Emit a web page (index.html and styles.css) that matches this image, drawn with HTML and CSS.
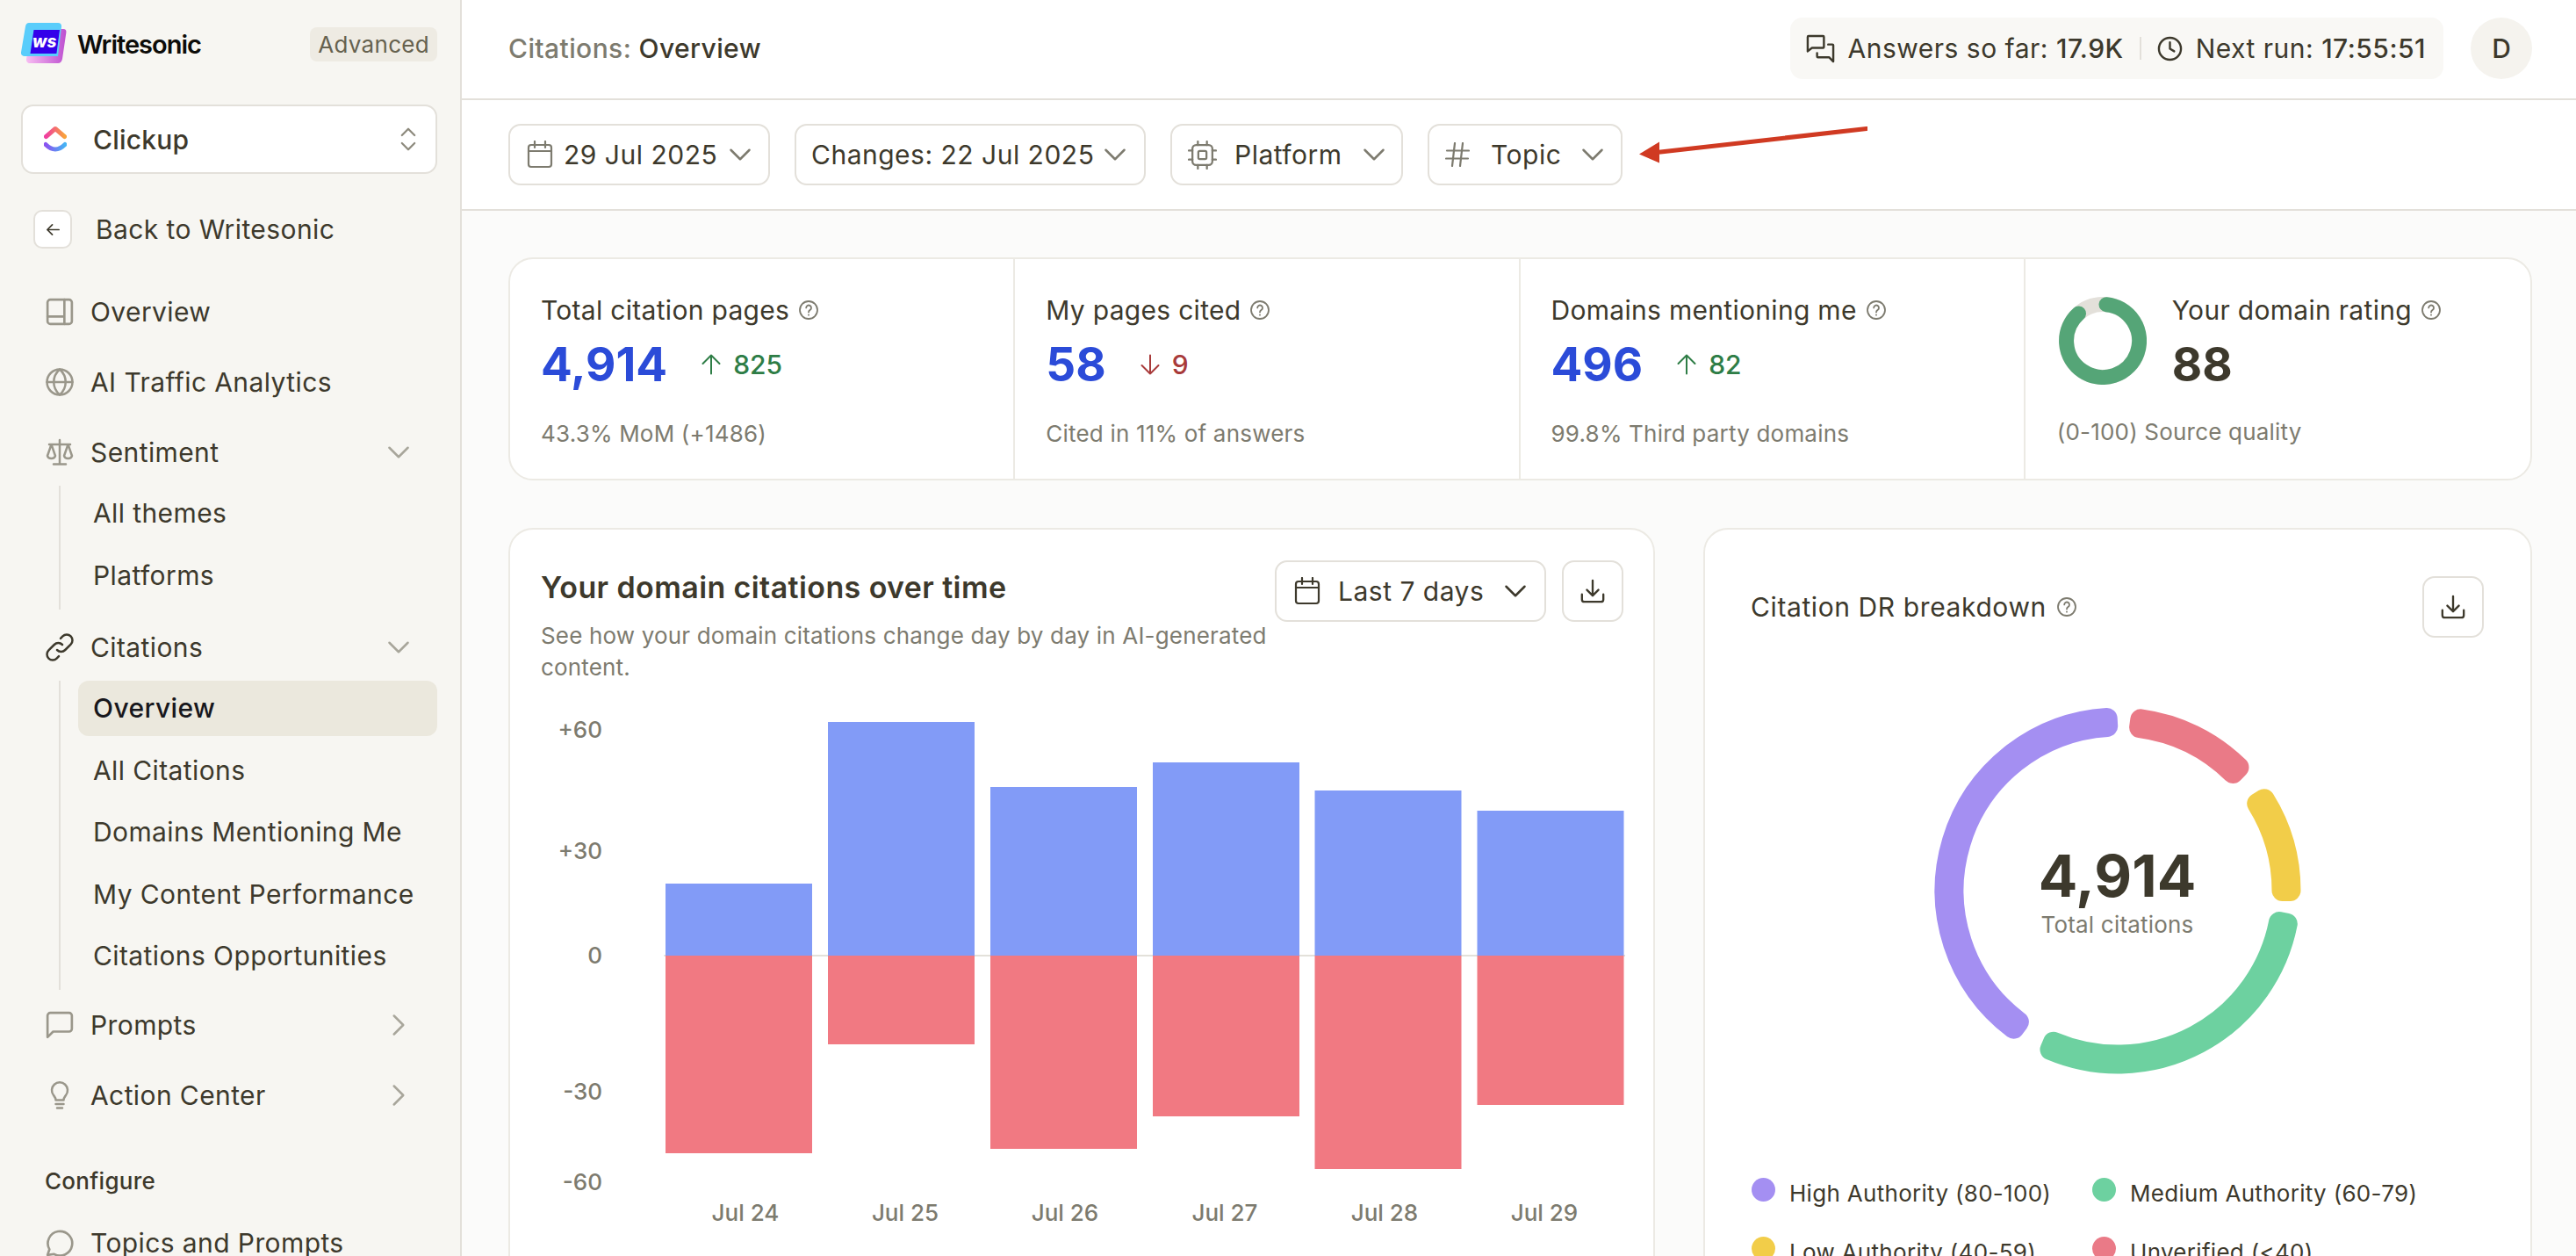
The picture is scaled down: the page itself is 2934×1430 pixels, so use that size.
FILE: index.html
```html
<!DOCTYPE html>
<html>

<head>
    <meta charset="utf-8" />
    <title>Citations: Overview</title>
    <meta name="viewport" content="width=device-width, initial-scale=1">
    <link rel="stylesheet" href="styles.css">
</head>

<body>
    <svg class="defs">
        <defs>
            <symbol id="i-chev" viewBox="0 0 24 24"><path d="M5 8.500l7 7 7-7" /></symbol>
            <symbol id="i-cal" viewBox="0 0 30 32"><rect x="2" y="5" width="26" height="25" rx="3" /><path d="M2 12h26M9 1v7M21 1v7" /></symbol>
            <symbol id="i-help" viewBox="0 0 24 24"><circle cx="12" cy="12" r="10" /><path d="M9.200 9.400a2.900 2.900 0 1 1 4.600 2.400c-1.100.8-1.800 1.300-1.800 2.600M12 17.400v.3" /></symbol>
            <symbol id="i-down" viewBox="0 0 32 32"><path d="M16 3v18M9 14.500l7 7 7-7M3 20v6a3 3 0 0 0 3 3h20a3 3 0 0 0 3-3v-6" /></symbol>
        </defs>
    </svg>

    <div class="app">
        <aside class="sidebar">
            <div class="brand">
                <svg class="brand-logo" viewBox="0 0 52 48">
                    <defs>
                        <linearGradient id="ws1" x1="0" x2="1" y1="0" y2="0"><stop offset="0" stop-color="#f8bdf2" /><stop offset="1" stop-color="#bd4fd0" /></linearGradient>
                    </defs>
                    <path d="M11 7h37c2.500 0 3.800 1.500 3.400 4L47 41c-.5 3-2.500 5-5 5H10c-2.500 0-4.300-2-4-4.500z" fill="url(#ws1)" />
                    <path d="M9 0h33c3 0 4.300 2 4 4.500L42 38H4c-3 0-4.400-2-4-4.500L5 4C5.500 1.500 7 0 9 0z" fill="#5acdfb" />
                    <path d="M14.500 8H44l-3.600 27H10.500z" fill="#3300ea" />
                    <text x="13" y="28" class="brand-ws">ws</text>
                </svg>
                <span class="brand-name">Writesonic</span>
                <span class="badge">Advanced</span>
            </div>

            <div class="project">
                <svg class="project-logo" viewBox="0 0 26 32">
                    <defs>
                        <linearGradient id="cu1" x1="0" x2="1" y1="0" y2="0"><stop offset="0" stop-color="#f03ea0" /><stop offset="1" stop-color="#f8a23c" /></linearGradient>
                        <linearGradient id="cu2" x1="0" x2="1" y1="0" y2="0"><stop offset="0" stop-color="#8b52f0" /><stop offset="1" stop-color="#46b4f4" /></linearGradient>
                    </defs>
                    <path d="M2.500 12.500L13 3.500l10.500 9" fill="none" stroke="url(#cu1)" stroke-width="5" />
                    <path d="M2 21.500c3 3 6.500 5.500 11 5.500s8-2.500 11-5.500" fill="none" stroke="url(#cu2)" stroke-width="5" />
                </svg>
                <span class="project-name">Clickup</span>
                <svg class="project-sort" viewBox="0 0 20 30"><path d="M2 10l8-8 8 8M2 20l8 8 8-8" /></svg>
            </div>

            <div class="back">
                <span class="back-btn"><svg viewBox="0 0 18 18"><path d="M16 9H2M8 3L2 9l6 6" /></svg></span>
                <span>Back to Writesonic</span>
            </div>

            <nav class="nav">
                <div class="nav-item">
                    <svg class="nav-icon" viewBox="0 0 30 30"><rect x="2" y="2" width="26" height="26" rx="3" /><path d="M20 2v26M2 20h18" /></svg>
                    <span>Overview</span>
                </div>
                <div class="nav-item">
                    <svg class="nav-icon" viewBox="0 0 32 32"><circle cx="16" cy="16" r="14.500" /><path d="M1.500 16h29M16 1.500c-9 8-9 21 0 29M16 1.500c9 8 9 21 0 29" /></svg>
                    <span>AI Traffic Analytics</span>
                </div>
                <div class="nav-item">
                    <svg class="nav-icon" viewBox="0 0 32 30"><path d="M16 1v26M9 28.500h14M4 6h24M6.500 6L2 19c1 4 8 4 9 0L6.500 6zM25.500 6L21 19c1 4 8 4 9 0L25.500 6z" /></svg>
                    <span>Sentiment</span>
                    <svg class="nav-chev" viewBox="0 0 24 24"><use href="#i-chev" /></svg>
                </div>
                <div class="nav-sub nav-sub-short">
                    <div class="sub-item">All themes</div>
                    <div class="sub-item">Platforms</div>
                </div>
                <div class="nav-item">
                    <svg class="nav-icon nav-icon-dark" viewBox="0 0 32 32"><path d="M13 19a6.500 6.500 0 0 0 9.200 0l6.400-6.400a6.500 6.500 0 0 0-9.200-9.200l-2.400 2.400M19 13a6.500 6.500 0 0 0-9.200 0l-6.400 6.400a6.500 6.500 0 0 0 9.200 9.200l2.400-2.400" /></svg>
                    <span>Citations</span>
                    <svg class="nav-chev" viewBox="0 0 24 24"><use href="#i-chev" /></svg>
                </div>
                <div class="nav-sub">
                    <div class="sub-item sub-item-active">Overview</div>
                    <div class="sub-item">All Citations</div>
                    <div class="sub-item">Domains Mentioning Me</div>
                    <div class="sub-item">My Content Performance</div>
                    <div class="sub-item">Citations Opportunities</div>
                </div>
                <div class="nav-item">
                    <svg class="nav-icon" viewBox="0 0 30 30"><path d="M2 28V5a3 3 0 0 1 3-3h20a3 3 0 0 1 3 3v14a3 3 0 0 1-3 3H8z" /></svg>
                    <span>Prompts</span>
                    <svg class="nav-chev nav-chev-right" viewBox="0 0 24 24"><use href="#i-chev" /></svg>
                </div>
                <div class="nav-item">
                    <svg class="nav-icon" viewBox="0 0 30 32"><path d="M10.500 21.500c0-2.500-1-3.500-2.500-5.500a9 9 0 1 1 14 0c-1.500 2-2.500 3-2.500 5.500zM10.500 26h9M12 30.500h6" /></svg>
                    <span>Action Center</span>
                    <svg class="nav-chev nav-chev-right" viewBox="0 0 24 24"><use href="#i-chev" /></svg>
                </div>
                <div class="nav-label">Configure</div>
                <div class="nav-item">
                    <svg class="nav-icon" viewBox="0 0 30 30"><path d="M2 28l2-6a13 13 0 1 1 5 5z" /></svg>
                    <span>Topics and Prompts</span>
                </div>
            </nav>
        </aside>

        <main class="content">
            <header class="topbar">
                <div class="crumbs"><span class="crumb-muted">Citations:</span> Overview</div>
                <div class="topbar-right">
                    <div class="usage">
                        <svg class="usage-icon" viewBox="0 0 34 34"><path d="M2 20V3a1 1 0 0 1 1-1h17a1 1 0 0 1 1 1v12a1 1 0 0 1-1 1H7zM26 12h5a1 1 0 0 1 1 1v19l-5-5H14a1 1 0 0 1-1-1v-4" /></svg>
                        <span>Answers so far: <b>17.9K</b></span>
                        <span class="usage-sep"></span>
                        <svg class="usage-icon usage-clock" viewBox="0 0 30 30"><circle cx="15" cy="15" r="13" /><path d="M15 7.500V15l5 3" /></svg>
                        <span>Next run: <b>17:55:51</b></span>
                    </div>
                    <div class="avatar">D</div>
                </div>
            </header>

            <div class="filters">
                <button class="btn btn-date">
                    <svg class="btn-icon" viewBox="0 0 30 32"><use href="#i-cal" /></svg>
                    <span>29 Jul 2025</span>
                    <svg class="btn-chev" viewBox="0 0 24 24"><use href="#i-chev" /></svg>
                </button>
                <button class="btn btn-changes">
                    <span>Changes: 22 Jul 2025</span>
                    <svg class="btn-chev" viewBox="0 0 24 24"><use href="#i-chev" /></svg>
                </button>
                <button class="btn btn-platform">
                    <svg class="btn-icon btn-icon-chip" viewBox="0 0 32 32"><rect x="5" y="5" width="22" height="22" rx="4" /><rect x="11.500" y="11.500" width="9" height="9" rx="1.500" /><path d="M11 1v4M21 1v4M11 27v4M21 27v4M1 11h4M1 21h4M27 11h4M27 21h4" /></svg>
                    <span>Platform</span>
                    <svg class="btn-chev" viewBox="0 0 24 24"><use href="#i-chev" /></svg>
                </button>
                <button class="btn btn-topic">
                    <svg class="btn-icon btn-icon-hash" viewBox="0 0 28 28"><path d="M2 9.500h25M1 18.500h25M11 1L8 27M20 1l-3 26" /></svg>
                    <span>Topic</span>
                    <svg class="btn-chev" viewBox="0 0 24 24"><use href="#i-chev" /></svg>
                </button>
                <svg class="callout" viewBox="0 0 260 50">
                    <path d="M20 30.500L259 3.500" stroke="#d03a22" stroke-width="5" fill="none" />
                    <path d="M0 32.500L23 18.500v24z" fill="#d03a22" />
                </svg>
            </div>

            <div class="page">
                <section class="stats">
                    <div class="stat">
                        <div class="stat-label">Total citation pages <svg class="help" viewBox="0 0 24 24"><use href="#i-help" /></svg></div>
                        <div class="stat-row">
                            <span class="stat-num">4,914</span>
                            <span class="delta delta-up"><svg viewBox="0 0 24 26"><path d="M12 23.500v-21M2.500 12L12 2.500l9.500 9.500" /></svg>825</span>
                        </div>
                        <div class="stat-note">43.3% MoM (+1486)</div>
                    </div>
                    <div class="stat">
                        <div class="stat-label">My pages cited <svg class="help" viewBox="0 0 24 24"><use href="#i-help" /></svg></div>
                        <div class="stat-row">
                            <span class="stat-num">58</span>
                            <span class="delta delta-down"><svg viewBox="0 0 24 26"><path d="M12 2.500v21M2.500 14l9.500 9.500 9.500-9.500" /></svg>9</span>
                        </div>
                        <div class="stat-note">Cited in 11% of answers</div>
                    </div>
                    <div class="stat">
                        <div class="stat-label">Domains mentioning me <svg class="help" viewBox="0 0 24 24"><use href="#i-help" /></svg></div>
                        <div class="stat-row">
                            <span class="stat-num">496</span>
                            <span class="delta delta-up"><svg viewBox="0 0 24 26"><path d="M12 23.500v-21M2.500 12L12 2.500l9.500 9.500" /></svg>82</span>
                        </div>
                        <div class="stat-note">99.8% Third party domains</div>
                    </div>
                    <div class="stat stat-rating">
                        <div class="rating-top">
                            <svg class="rating-ring" viewBox="0 0 100 100">
                                <circle cx="50" cy="50" r="41.500" fill="none" stroke="#e3e0da" stroke-width="17" />
                                <path d="M54 8.700A41.500 41.500 0 1 1 22.500 19" fill="none" stroke="#55a577" stroke-width="17" />
                            </svg>
                            <div>
                                <div class="stat-label">Your domain rating <svg class="help" viewBox="0 0 24 24"><use href="#i-help" /></svg></div>
                                <div class="stat-row"><span class="stat-num stat-num-dark">88</span></div>
                            </div>
                        </div>
                        <div class="stat-note">(0-100) Source quality</div>
                    </div>
                </section>

                <section class="panels">
                    <div class="panel panel-chart">
                        <div class="panel-head">
                            <div class="panel-intro">
                                <h2>Your domain citations over time</h2>
                                <p>See how your domain citations change day by day in AI-generated content.</p>
                            </div>
                            <div class="panel-tools">
                                <button class="btn btn-range">
                                    <svg class="btn-icon" viewBox="0 0 30 32"><use href="#i-cal" /></svg>
                                    <span>Last 7 days</span>
                                    <svg class="btn-chev" viewBox="0 0 24 24"><use href="#i-chev" /></svg>
                                </button>
                                <button class="btn btn-square"><svg viewBox="0 0 32 32"><use href="#i-down" /></svg></button>
                            </div>
                        </div>
                        <svg class="chart" viewBox="0 0 1268 600" width="1268" height="600">
                            <line x1="174" x2="1268" y1="288" y2="288" stroke="#e3e1da" stroke-width="2" />
                            <g fill="#829bf7">
                                <rect x="175" y="206" width="167" height="82" />
                                <rect x="360" y="22" width="167" height="266" />
                                <rect x="545" y="96" width="167" height="192" />
                                <rect x="730" y="68" width="167" height="220" />
                                <rect x="914.500" y="100" width="167" height="188" />
                                <rect x="1099.500" y="123" width="167" height="165" />
                            </g>
                            <g fill="#f17982">
                                <rect x="175" y="288" width="167" height="225" />
                                <rect x="360" y="288" width="167" height="101" />
                                <rect x="545" y="288" width="167" height="220" />
                                <rect x="730" y="288" width="167" height="183" />
                                <rect x="914.500" y="288" width="167" height="243" />
                                <rect x="1099.500" y="288" width="167" height="170" />
                            </g>
                            <g class="chart-y">
                                <text x="103" y="40">+60</text>
                                <text x="103" y="178">+30</text>
                                <text x="103" y="297">0</text>
                                <text x="103" y="452">-30</text>
                                <text x="103" y="555">-60</text>
                            </g>
                            <g class="chart-x">
                                <text x="266" y="590">Jul 24</text>
                                <text x="448" y="590">Jul 25</text>
                                <text x="630" y="590">Jul 26</text>
                                <text x="812" y="590">Jul 27</text>
                                <text x="994" y="590">Jul 28</text>
                                <text x="1176" y="590">Jul 29</text>
                            </g>
                        </svg>
                    </div>

                    <div class="panel panel-dr">
                        <div class="dr-head">
                            <div class="dr-title">Citation DR breakdown <svg class="help" viewBox="0 0 24 24"><use href="#i-help" /></svg></div>
                            <button class="btn btn-square"><svg viewBox="0 0 32 32"><use href="#i-down" /></svg></button>
                        </div>
                        <div class="donut">
                            <svg viewBox="-210 -210 420 420" width="420" height="420">
                                <g stroke-width="24" stroke-linejoin="round">
                                    <path fill="#a48ff2" stroke="#a48ff2" d="M-118.500 156.700A196.500 196.500 0 0 1-12.300-196.100L-11.800-187.100A187.500 187.500 0 0 0-113.100 149.500Z" />
                                    <path fill="#ea7a87" stroke="#ea7a87" d="M26.300-194.700A196.500 196.500 0 0 1 137.500-140.400L131.200-134A187.500 187.500 0 0 0 25.100-185.800Z" />
                                    <path fill="#f2cd49" stroke="#f2cd49" d="M166.800-103.800A196.500 196.500 0 0 1 196.500 0L187.500 0A187.500 187.500 0 0 0 159.200-99.100Z" />
                                    <path fill="#6dd1a0" stroke="#6dd1a0" d="M192.800 37.800A196.500 196.500 0 0 1-76.500 181L-73 172.700A187.500 187.500 0 0 0 184 36.100Z" />
                                </g>
                            </svg>
                            <div class="donut-center">
                                <div class="donut-num">4,914</div>
                                <div class="donut-label">Total citations</div>
                            </div>
                        </div>
                        <div class="legend">
                            <div class="legend-item"><span class="dot dot-high"></span>High Authority (80-100)</div>
                            <div class="legend-item"><span class="dot dot-medium"></span>Medium Authority (60-79)</div>
                            <div class="legend-item"><span class="dot dot-low"></span>Low Authority (40-59)</div>
                            <div class="legend-item"><span class="dot dot-unverified"></span>Unverified (&lt;40)</div>
                        </div>
                    </div>
                </section>
            </div>
        </main>
    </div>
</body>

</html>
```

FILE: styles.css
```css
* {
    box-sizing: border-box;
}

html,
body {
    margin: 0;
    height: 100%;
    overflow: hidden;
}

body {
    font-family: Inter, "Noto Sans", sans-serif;
    color: #3d392c;
    background: #fff;
}

svg {
    fill: none;
    stroke: currentColor;
    stroke-linecap: round;
    stroke-linejoin: round;
    flex-shrink: 0;
}

.defs {
    display: none;
}

.app {
    display: flex;
    height: 1430px;
    overflow: hidden;
}

/* sidebar */
.sidebar {
    width: 526px;
    flex-shrink: 0;
    background: #f7f6f2;
    border-right: 2px solid #e3e0da;
    padding: 27px 26px 0 24px;
    overflow: hidden;
}

.brand {
    display: flex;
    align-items: center;
    height: 46px;
}

.brand-logo {
    width: 52px;
    height: 48px;
    stroke: none;
}

.brand-ws {
    font-family: Inter, sans-serif;
    font-size: 19px;
    font-weight: 800;
    font-style: italic;
    fill: #fff;
}

.brand-name {
    margin-left: 12px;
    font-size: 29px;
    font-weight: 600;
    letter-spacing: -1px;
    color: #0d0c09;
}

.badge {
    margin-left: auto;
    height: 39px;
    padding: 0 9px;
    display: flex;
    align-items: center;
    font-size: 26px;
    letter-spacing: .3px;
    color: #66624f;
    background: #eeebe3;
    border-radius: 8px;
}

.project {
    display: flex;
    align-items: center;
    height: 79px;
    margin-top: 46px;
    padding: 0 22px 0 24px;
    background: #fff;
    border: 2px solid #e3e0da;
    border-radius: 14px;
}

.project-logo {
    width: 26px;
    height: 32px;
    stroke: none;
}

.project-name {
    margin-left: 30px;
    font-size: 30px;
    font-weight: 500;
    letter-spacing: .2px;
}

.project-sort {
    width: 18px;
    height: 27px;
    margin-left: auto;
    color: #8d8a7d;
    stroke-width: 2.500;
}

.back {
    display: flex;
    align-items: center;
    gap: 27px;
    margin: 41px 0 0 14px;
    font-size: 30px;
    letter-spacing: .4px;
}

.back-btn {
    width: 44px;
    height: 44px;
    display: flex;
    align-items: center;
    justify-content: center;
    background: #fff;
    border: 2px solid #e3e0da;
    border-radius: 10px;
}

.back-btn svg {
    width: 17px;
    height: 17px;
    stroke-width: 1.800;
}

.nav {
    margin-top: 32px;
    font-size: 30px;
    letter-spacing: .4px;
}

.nav-item {
    display: flex;
    align-items: center;
    height: 80px;
    padding-left: 28px;
}

.nav-item > span {
    margin-left: 19px;
}

.nav-icon {
    width: 32px;
    height: 32px;
    color: #9a978b;
    stroke-width: 2.500;
}

.nav-icon-dark {
    color: #3d392c;
}

.nav-chev {
    width: 36px;
    height: 36px;
    margin-left: auto;
    margin-right: 26px;
    color: #a8a69b;
    stroke-width: 1.700;
}

.nav-chev-right {
    transform: rotate(-90deg);
}

.nav-sub {
    margin: -2px 0 0 43px;
    padding-left: 20px;
    border-left: 2px solid #e3e0da;
    display: flex;
    flex-direction: column;
    gap: 8px;
    height: 352px;
}

.nav-sub-short {
    height: 141px;
    margin-bottom: 3px;
}

.sub-item {
    display: flex;
    align-items: center;
    height: 62.500px;
    padding-left: 17px;
    border-radius: 12px;
}

.sub-item-active {
    background: #ebe8dd;
    font-weight: 500;
    color: #17171c;
}

.nav-label {
    margin: 43px 0 15px 27px;
    height: 30px;
    line-height: 30px;
    font-size: 26px;
    font-weight: 500;
    letter-spacing: .3px;
}

/* top bars */
.content {
    flex: 1;
    min-width: 0;
    overflow: hidden;
    background: #fbfbfa;
}

.topbar {
    display: flex;
    align-items: center;
    justify-content: space-between;
    height: 114px;
    padding: 0 50px 2px 53px;
    background: #fff;
    border-bottom: 2px solid #e3e0da;
}

.crumbs {
    font-size: 30px;
    font-weight: 500;
    letter-spacing: .4px;
}

.crumb-muted {
    color: #7d7b6f;
}

.topbar-right {
    display: flex;
    align-items: center;
    gap: 31px;
}

.usage {
    display: flex;
    align-items: center;
    height: 70px;
    padding: 0 20px 0 18px;
    background: #f9f8f5;
    border-radius: 14px;
    font-size: 30px;
    letter-spacing: .5px;
}

.usage b {
    font-weight: 500;
}

.usage-icon {
    width: 33px;
    height: 33px;
    margin-right: 15px;
    stroke-width: 2.500;
}

.usage-clock {
    width: 29px;
    height: 29px;
}

.usage-sep {
    width: 2px;
    height: 26px;
    margin: 0 18px;
    background: #e3e0da;
}

.avatar {
    width: 70px;
    height: 70px;
    display: flex;
    align-items: center;
    justify-content: center;
    border-radius: 50%;
    background: #f5f3ee;
    font-size: 30px;
    font-weight: 500;
}

.filters {
    display: flex;
    align-items: center;
    gap: 28px;
    height: 126px;
    padding-left: 53px;
    background: #fff;
    border-bottom: 2px solid #e3e0da;
}

.btn {
    display: flex;
    align-items: center;
    height: 70px;
    background: #fff;
    border: 2px solid #e3e0da;
    border-radius: 14px;
    font: 400 30px Inter, sans-serif;
    letter-spacing: .5px;
    color: #3d392c;
    padding: 0;
}

.btn-icon {
    width: 30px;
    height: 32px;
    color: #7d7b6f;
    stroke-width: 2.200;
}

.btn-icon-chip {
    width: 33px;
    height: 33px;
}

.btn-icon-hash {
    width: 28px;
    height: 28px;
}

.btn-chev {
    width: 36px;
    height: 36px;
    color: #7d7b6f;
    stroke-width: 1.700;
}

.btn-date {
    width: 298px;
    padding-left: 19px;
    gap: 12px;
}

.btn-date .btn-chev {
    margin-left: -4px;
}

.btn-changes {
    width: 400px;
    padding-left: 17px;
    gap: 6px;
}

.btn-platform {
    width: 265px;
    padding-left: 18px;
    gap: 20px;
}

.btn-platform .btn-chev {
    margin-left: -2px;
}

.btn-topic {
    width: 222px;
    padding-left: 18px;
    gap: 24px;
}

.btn-topic .btn-chev {
    margin-left: -6px;
}

.btn-range {
    width: 309px;
    padding-left: 20px;
    gap: 20px;
}

.btn-range .btn-icon {
    color: #3d392c;
}

.btn-range .btn-chev {
    margin-left: -2px;
    color: #3d392c;
}

.btn-square {
    width: 70px;
    justify-content: center;
}

.btn-square svg {
    width: 30px;
    height: 30px;
    stroke-width: 2.500;
}

.callout {
    width: 260px;
    height: 50px;
    margin-left: -9px;
    margin-top: -16px;
    stroke: none;
}

/* page */
.page {
    padding: 53px 50px 0 53px;
}

.stats {
    display: grid;
    grid-template-columns: repeat(4, 1fr);
    height: 254px;
    background: #fff;
    border: 2px solid #eceae4;
    border-radius: 28px;
}

.stat {
    padding: 40px 20px 0 35px;
    border-right: 2px solid #eceae4;
}

.stat:last-child {
    border-right: 0;
}

.stat-label {
    display: flex;
    align-items: center;
    gap: 10px;
    height: 36px;
    font-size: 30px;
    letter-spacing: .3px;
    white-space: nowrap;
}

.help {
    width: 24px;
    height: 24px;
    color: #7d7b6f;
    stroke-width: 1.800;
}

.stat-row {
    display: flex;
    align-items: center;
    gap: 38px;
    height: 66px;
    margin-top: 11px;
}

.stat-num {
    font-size: 53px;
    font-weight: 700;
    color: #2b4bd8;
}

.stat-num-dark {
    color: #3d392c;
}

.delta {
    display: flex;
    align-items: center;
    gap: 13px;
    font-size: 30px;
    font-weight: 500;
}

.delta svg {
    width: 24px;
    height: 26px;
    stroke-width: 2;
}

.delta-up {
    color: #2e7d46;
}

.delta-down {
    color: #a83a3a;
}

.stat-note {
    margin-top: 30px;
    font-size: 26px;
    letter-spacing: .2px;
    color: #7d7b6f;
}

.rating-top {
    display: flex;
    gap: 29px;
    height: 100px;
}

.stat-rating {
    padding: 40px 20px 0 36px;
}

.rating-ring {
    width: 100px;
    height: 100px;
    margin: 3px 0 0 2px;
}

.stat-rating .stat-note {
    margin-top: 41px;
}

.panels {
    display: grid;
    grid-template-columns: 1306px 944px;
    gap: 55px;
    margin-top: 54px;
}

.panel {
    height: 860px;
    background: #fff;
    border: 2px solid #eceae4;
    border-radius: 28px;
}

.panel-chart {
    padding: 35px 34px 0 35px;
}

.panel-head {
    display: flex;
    justify-content: space-between;
}

.panel-intro {
    width: 834px;
}

.panel-intro h2 {
    margin: 0;
    padding-top: 10px;
    font-size: 34px;
    line-height: 42px;
    font-weight: 600;
    letter-spacing: .4px;
}

.panel-intro p {
    margin: 16px 0 0;
    font-size: 26px;
    line-height: 36px;
    letter-spacing: .17px;
    color: #7d7b6f;
}

.panel-tools {
    display: flex;
    gap: 18px;
}

.chart {
    display: block;
    margin: 22px 0 0 -33px;
    stroke: none;
}

.chart-y text {
    font-size: 26px;
    font-weight: 500;
    fill: #7d7b6f;
    text-anchor: end;
}

.chart-x text {
    font-size: 26px;
    font-weight: 500;
    fill: #7d7b6f;
    text-anchor: middle;
}

.panel-dr {
    padding: 53px 53px 0 52px;
}

.dr-head {
    display: flex;
    justify-content: space-between;
    align-items: center;
}

.dr-title {
    display: flex;
    align-items: center;
    gap: 11px;
    font-size: 30px;
    letter-spacing: .6px;
}

.donut {
    position: relative;
    width: 420px;
    height: 420px;
    margin: 78px auto 0;
}

.donut svg {
    stroke: none;
}

.donut-center {
    position: absolute;
    inset: 0;
    display: flex;
    flex-direction: column;
    align-items: center;
    justify-content: center;
    padding-bottom: 2px;
}

.donut-num {
    font-size: 66px;
    line-height: 80px;
    font-weight: 700;
}

.donut-label {
    font-size: 26px;
    line-height: 32px;
    letter-spacing: .2px;
    color: #7d7b6f;
}

.legend {
    display: grid;
    grid-template-columns: 388px auto;
    row-gap: 31px;
    margin: 116px 0 0 1px;
}

.legend-item {
    display: flex;
    align-items: center;
    gap: 16px;
    height: 36px;
    font-size: 26px;
    letter-spacing: .3px;
}

.dot {
    width: 27px;
    height: 27px;
    margin-top: -8px;
    border-radius: 50%;
}

.dot-high {
    background: #a48ff2;
}

.dot-medium {
    background: #6dd1a0;
}

.dot-low {
    background: #f2cd49;
}

.dot-unverified {
    background: #ea7a87;
}
```
